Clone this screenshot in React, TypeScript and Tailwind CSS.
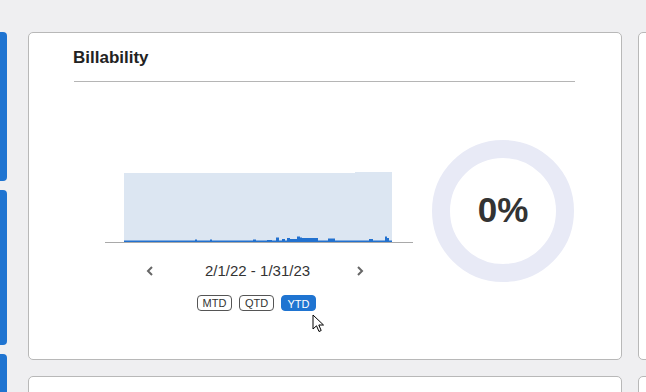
import React from "react";

const spikes: [number, number, number][] = [
  // [startX, endX, height] in chart coords (x from svg left)
  [90, 92, 1],
  [105, 107, 1],
  [148, 151, 1],
  [162, 167, 0.5],
  [171, 174, 3],
  [177, 180, 1.5],
  [182, 185, 2.5],
  [185, 192, 1.5],
  [192, 195, 4],
  [195, 197, 3],
  [197, 213, 2.5],
  [223, 230, 2],
  [264, 268, 1.5],
  [280, 282, 4],
  [282, 284, 2.5],
];

function spikePath() {
  const base = 70.5;
  let d = `M19 72 L19 ${base}`;
  for (const [a, b, h] of spikes) {
    d += ` L${a} ${base} L${a} ${base - h} L${b} ${base - h} L${b} ${base}`;
  }
  d += ` L287 ${base} L287 72 Z`;
  return d;
}

function Chevron({ dir }: { dir: "left" | "right" }) {
  return (
    <svg width="8" height="10" viewBox="0 0 8 10">
      <polyline
        points={dir === "left" ? "6,1 2,5 6,9" : "2,1 6,5 2,9"}
        fill="none"
        stroke="#666"
        strokeWidth="2"
      />
    </svg>
  );
}

function RangeButton({ label, active }: { label: string; active?: boolean }) {
  return (
    <button
      className={
        active
          ? "w-[35px] h-4 rounded-[4px] bg-[#1f74d1] text-white text-[11px] leading-4 border border-[#1f74d1]"
          : "w-[35px] h-4 rounded-[4px] bg-white text-[#333] text-[11px] leading-[14px] border border-[#555]"
      }
    >
      {label}
    </button>
  );
}

function BillabilityCard() {
  return (
    <div className="relative w-[594px] h-[328px] shrink-0 bg-white border border-[#b8b8b8] rounded-[5px]">
      <div className="pt-[15px] pl-[44px] pr-[46px]">
        <h2 className="text-[17px] leading-5 font-bold text-[#222]">Billability</h2>
        <div className="mt-[13px] ml-[1px] border-t border-[#b5b5b5]" />
      </div>
      <div className="flex items-start pl-[76px]">
        <div className="w-[308px] mt-[88px] flex flex-col items-center">
          <svg width="308" height="75" viewBox="0 0 308 75">
            <path d="M19 72 L19 3 L250 3 L250 2 L287 2 L287 72 Z" fill="#dce6f2" />
            <path d={spikePath()} fill="#2271cf" />
            <rect x="0" y="72" width="308" height="1" fill="#a9a9a9" />
          </svg>
          <div className="mt-[16px] h-5 flex items-center w-full">
            <div className="ml-[41px]">
              <Chevron dir="left" />
            </div>
            <span className="ml-[51px] text-[15px] text-[#333] leading-5">2/1/22 - 1/31/23</span>
            <div className="ml-[46px]">
              <Chevron dir="right" />
            </div>
          </div>
          <div className="mt-[14px] flex gap-[7px] pr-[5px]">
            <RangeButton label="MTD" />
            <RangeButton label="QTD" />
            <RangeButton label="YTD" active />
          </div>
        </div>
        <div className="relative ml-[19px] mt-[58px] w-[142px] h-[142px]">
          <svg width="142" height="142" viewBox="0 0 142 142" className="absolute inset-0">
            <circle cx="71" cy="71" r="62" fill="none" stroke="#e8eaf6" strokeWidth="18" />
          </svg>
          <div className="absolute inset-0 flex items-center justify-center pb-[3px]">
            <span className="text-[35px] font-bold text-[#333] leading-none">0%</span>
          </div>
        </div>
      </div>
      {/* mouse pointer */}
      <svg
        width="13"
        height="20"
        viewBox="0 0 13 20"
        className="absolute left-[283px] top-[281px]"
      >
        <path
          d="M1 1 L1 15 L4.5 11.8 L7 17.5 L9.2 16.5 L6.8 11 L11.5 11 Z"
          fill="#fff"
          stroke="#000"
          strokeWidth="1"
          strokeLinejoin="round"
        />
      </svg>
    </div>
  );
}

export default function App() {
  return (
    <div
      className="w-[646px] h-[392px] overflow-hidden bg-[#efeff1] flex"
      style={{ fontFamily: '"Liberation Sans", Arial, sans-serif' }}
    >
      <div className="w-[7px] shrink-0 pt-[32px] flex flex-col gap-[9px]">
        <div className="h-[149px] shrink-0 bg-[#1f74d1] rounded-r-[4px]" />
        <div className="h-[155px] shrink-0 bg-[#1f74d1] rounded-r-[4px]" />
        <div className="h-[60px] shrink-0 bg-[#1f74d1] rounded-r-[4px]" />
      </div>
      <div className="ml-[21px] pt-[32px] flex flex-col gap-[16px]">
        <BillabilityCard />
        <div className="w-[594px] h-[100px] shrink-0 bg-white border border-[#b8b8b8] rounded-[5px]" />
      </div>
      <div className="ml-[16px] pt-[32px] flex flex-col gap-[16px]">
        <div className="w-[200px] h-[328px] shrink-0 bg-white border border-[#b8b8b8] rounded-[5px]" />
        <div className="w-[200px] h-[100px] shrink-0 bg-white border border-[#b8b8b8] rounded-[5px]" />
      </div>
    </div>
  );
}
